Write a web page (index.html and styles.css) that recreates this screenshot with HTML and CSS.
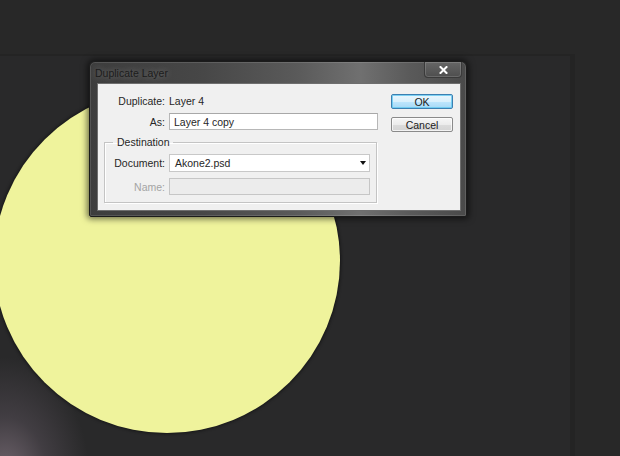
FILE: index.html
```html
<!DOCTYPE html>
<html>
<head>
<meta charset="utf-8">
<link rel="stylesheet" href="styles.css">
</head>
<body>
<div class="workspace">
  <div class="canvas">
    <div class="glow"></div>
    <div class="circle"></div>
  </div>
  <div class="dialog">
    <div class="titlebar">
      <span class="title">Duplicate Layer</span>
      <span class="close">
        <svg width="9" height="8" viewBox="0 0 9 8"><path d="M1.5 1 L7.5 7 M7.5 1 L1.5 7" stroke="#fff" stroke-width="2" stroke-linecap="square"/></svg>
      </span>
    </div>
    <div class="body">
      <div class="fields">
        <div class="row r-dup">
          <span class="label">Duplicate:</span>
          <span class="value">Layer 4</span>
        </div>
        <div class="row r-as">
          <span class="label">As:</span>
          <span class="input">Layer 4 copy</span>
        </div>
        <fieldset class="group">
          <legend>Destination</legend>
          <div class="row r-doc">
            <span class="label">Document:</span>
            <span class="select">Akone2.psd<span class="arrow"></span></span>
          </div>
          <div class="row r-name">
            <span class="label disabled">Name:</span>
            <span class="input disabled-input"></span>
          </div>
        </fieldset>
      </div>
      <div class="buttons">
        <span class="btn default">OK</span>
        <span class="btn">Cancel</span>
      </div>
    </div>
  </div>
</div>
</body>
</html>
```
FILE: styles.css
```css
html, body {
  margin: 0;
  padding: 0;
}
body {
  width: 620px;
  height: 456px;
  background: #282828;
  overflow: hidden;
  font-family: "Liberation Sans", Arial, sans-serif;
  font-size: 10.5px;
  color: #262626;
}
.workspace {
  position: relative;
  width: 620px;
  height: 456px;
  padding-top: 54px;
  box-sizing: border-box;
}
.canvas {
  position: relative;
  width: 570px;
  height: 402px;
  background: #29292a;
  border-top: 2px solid #242424;
  border-right: 5px solid #242424;
  overflow: hidden;
}
.glow {
  position: absolute;
  left: -80px;
  top: 300px;
  width: 170px;
  height: 240px;
  background: radial-gradient(ellipse at center, rgba(125,112,122,0.85) 0%, rgba(95,86,96,0.45) 35%, rgba(45,42,48,0) 70%);
}
.circle {
  position: absolute;
  left: -6px;
  top: 33px;
  width: 346px;
  height: 344px;
  border-radius: 50%;
  background: #eff39c;
  box-shadow: 0 0 3px 1px rgba(10,10,10,0.6);
}
.dialog {
  position: absolute;
  left: 89px;
  top: 61px;
  width: 378px;
  height: 156px;
  box-sizing: border-box;
  border: 1px solid #1b1b1b;
  border-radius: 6px 6px 2px 2px;
  background: linear-gradient(90deg, #3d3d3d 0%, #474747 30%, #5a5a5a 55%, #707070 72%, #5a5a5a 85%, #4a4a4a 100%);
  box-shadow: 0 0 6px 2px rgba(0,0,0,0.55), inset 0 0 0 1px rgba(255,255,255,0.12);
  display: flex;
  flex-direction: column;
}
.titlebar {
  height: 20px;
  display: flex;
  align-items: flex-start;
  justify-content: space-between;
  padding-left: 5px;
  padding-right: 4px;
}
.title {
  margin-top: 5px;
  font-size: 10.5px;
  color: #1c1c1c;
  text-shadow: 0 0 6px rgba(255,255,255,0.35);
}
.close {
  width: 38px;
  height: 16px;
  box-sizing: border-box;
  border: 1px solid #3a3a3a;
  border-top: none;
  border-radius: 0 0 4px 4px;
  background: linear-gradient(#666, #4e4e4e);
  box-shadow: inset 0 0 0 1px rgba(255,255,255,0.15);
  display: flex;
  align-items: center;
  justify-content: center;
}
.body {
  margin: 1px 5px 5px 7px;
  flex: 1;
  background: #f0f0f0;
  border: 1px solid #6e6e6e;
  display: flex;
  padding: 0;
}
.fields {
  width: 286px;
  padding-top: 8px;
  display: flex;
  flex-direction: column;
}
.row {
  display: flex;
  align-items: center;
  height: 17px;
}
.label {
  width: 67px;
  text-align: right;
  padding-right: 4px;
  flex: none;
}
.r-as {
  margin-top: 4px;
}
.input {
  display: block;
  width: 209px;
  height: 17px;
  box-sizing: border-box;
  background: #fff;
  border: 1px solid #b7b7b7;
  border-top-color: #a8a8a8;
  padding: 1px 0 0 4px;
  line-height: 14px;
}
.group {
  margin: 6px 0 0 6px;
  padding: 0 0 0 0;
  width: 273px;
  height: 67px;
  box-sizing: border-box;
  border: 1px solid #c4c4c4;
  box-shadow: inset 1px 1px 0 #fff, 1px 1px 0 #fff;
}
.group legend {
  margin-left: 8px;
  padding: 0 3px 0 4px;
  font-size: 10.5px;
  line-height: 12px;
}
.group .label {
  width: 60px;
}
.r-doc {
  margin-top: 6px;
  height: 18px;
}
.select {
  position: relative;
  display: block;
  width: 201px;
  height: 18px;
  box-sizing: border-box;
  background: #fff;
  border: 1px solid #c8c8c8;
  padding: 1px 0 0 5px;
  line-height: 15px;
}
.arrow {
  position: absolute;
  right: 3px;
  top: 6px;
  width: 0;
  height: 0;
  border-left: 3.5px solid transparent;
  border-right: 3.5px solid transparent;
  border-top: 4px solid #111;
}
.r-name {
  margin-top: 6px;
}
.disabled {
  color: #a4a4a4;
}
.disabled-input {
  width: 201px;
  height: 17px;
  background: #ececec;
  border: 1px solid #c6c6c6;
}
.buttons {
  padding-top: 10px;
  padding-left: 7px;
  display: flex;
  flex-direction: column;
  gap: 8px;
}
.btn {
  display: flex;
  align-items: center;
  justify-content: center;
  width: 62px;
  height: 15px;
  box-sizing: border-box;
  border: 1px solid #8a8a8a;
  border-radius: 2px;
  background: linear-gradient(#f6f6f6 0%, #ececec 50%, #dcdcdc 51%, #d4d4d4 100%);
  box-shadow: inset 0 0 0 1px rgba(255,255,255,0.7);
  font-size: 10.5px;
  color: #1a1a1a;
}
.btn.default {
  border-color: #3c7fb1;
  background: linear-gradient(#eaf6fd 0%, #d9f0fc 50%, #bee6fd 51%, #a7d9f5 100%);
  box-shadow: inset 0 0 0 1px rgba(98,200,240,0.8);
}
```
